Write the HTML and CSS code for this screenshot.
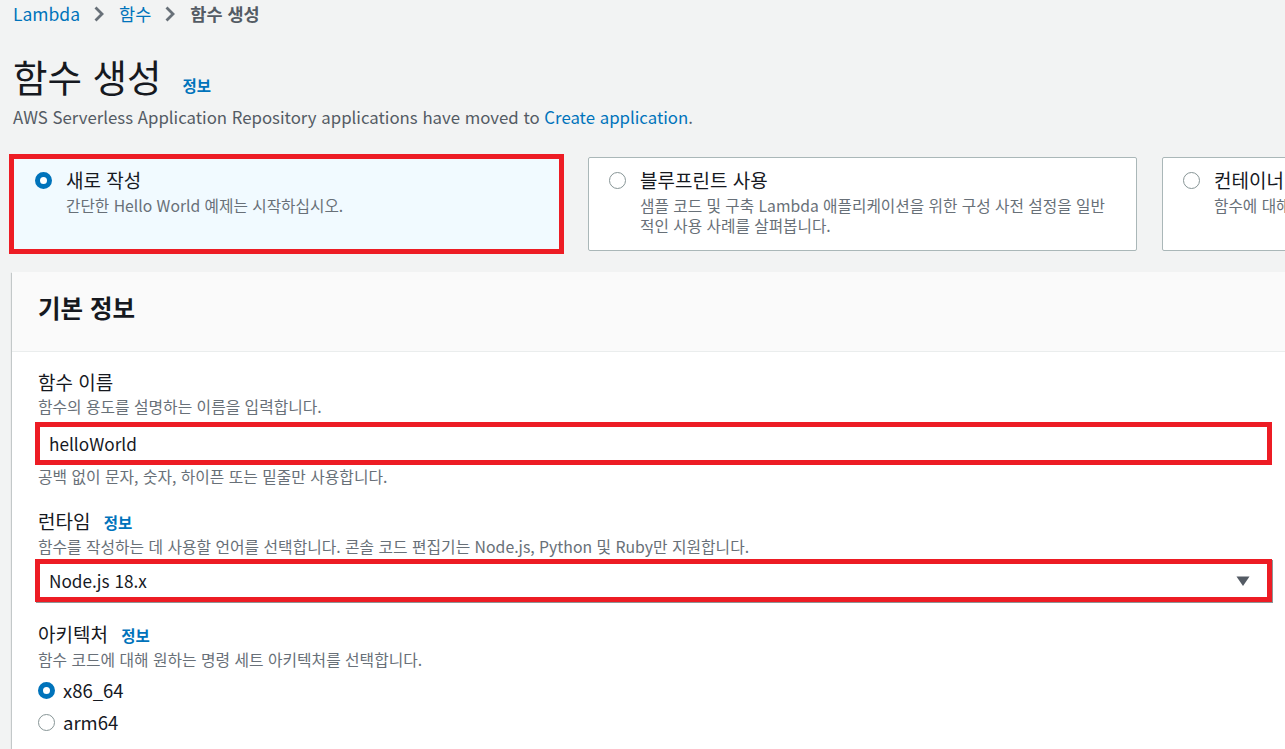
FILE: index.html
```
<!DOCTYPE html>
<html lang="ko">
	<head>
		<meta charset="UTF-8">
		<title>함수 생성</title>
		<link rel="stylesheet" href="styles.css">
	</head>
	<body>
		<nav class="crumbs">
			<a href="#">Lambda</a>
			<svg class="chev" width="12" height="18" viewBox="0 0 12 18"><path d="M2.5 2.5l6.5 6.5-6.5 6.5" fill="none" stroke="#687078" stroke-width="2.8"/></svg>
			<a href="#">함수</a>
			<svg class="chev" width="12" height="18" viewBox="0 0 12 18"><path d="M2.5 2.5l6.5 6.5-6.5 6.5" fill="none" stroke="#687078" stroke-width="2.8"/></svg>
			<span>함수 생성</span>
		</nav>

		<header class="page-head">
			<h1>함수 생성</h1>
			<a href="#" class="info">정보</a>
		</header>
		<p class="notice">AWS Serverless Application Repository applications have moved to <a href="#">Create application</a>.</p>

		<div class="cards">
			<label class="card selected marked">
				<span class="radio on"></span>
				<span class="card-text">
					<span class="card-title">새로 작성</span>
					<span class="card-desc">간단한 Hello World 예제는 시작하십시오.</span>
				</span>
			</label>
			<label class="card">
				<span class="radio"></span>
				<span class="card-text">
					<span class="card-title">블루프린트 사용</span>
					<span class="card-desc">샘플 코드 및 구축 Lambda 애플리케이션을 위한 구성 사전 설정을 일반적인 사용 사례를 살펴봅니다.</span>
				</span>
			</label>
			<label class="card">
				<span class="radio"></span>
				<span class="card-text">
					<span class="card-title">컨테이너 이미지</span>
					<span class="card-desc">함수에 대해 배포할 컨테이너 이미지를 선택합니다.</span>
				</span>
			</label>
		</div>

		<section class="panel">
			<h2 class="panel-head">기본 정보</h2>
			<div class="panel-body">
				<div class="field">
					<div class="label">함수 이름</div>
					<div class="desc">함수의 용도를 설명하는 이름을 입력합니다.</div>
					<div class="input marked">helloWorld</div>
					<div class="desc">공백 없이 문자, 숫자, 하이픈 또는 밑줄만 사용합니다.</div>
				</div>
				<div class="field">
					<div class="label">런타임 <a href="#" class="info">정보</a></div>
					<div class="desc">함수를 작성하는 데 사용할 언어를 선택합니다. 콘솔 코드 편집기는 Node.js, Python 및 Ruby만 지원합니다.</div>
					<div class="input select marked">
						<span>Node.js 18.x</span>
						<svg width="14" height="10" viewBox="0 0 14 10"><path d="M0.5 0.5h13L7 10z" fill="#545b64"/></svg>
					</div>
				</div>
				<div class="field">
					<div class="label">아키텍처 <a href="#" class="info">정보</a></div>
					<div class="desc">함수 코드에 대해 원하는 명령 세트 아키텍처를 선택합니다.</div>
					<div class="choices">
						<label class="choice"><span class="radio on"></span>x86_64</label>
						<label class="choice"><span class="radio"></span>arm64</label>
					</div>
				</div>
			</div>
		</section>
	</body>
</html>
```
FILE: styles.css
```
body {
    margin: 0;
    padding: 2px 13px 0;
    background: #f2f3f3;
    color: #16191f;
    font-family: "Noto Sans CJK KR", "Noto Sans", sans-serif;
    font-size: 16px;
    overflow: hidden;
    width: 1400px;
}

a {
    color: #0073bb;
    text-decoration: none;
}

.crumbs {
    display: flex;
    align-items: center;
    height: 24px;
    line-height: 24px;
    font-size: 17.5px;
}

.crumbs span {
    color: #545b64;
    font-weight: bold;
}

.chev {
    margin: 0 14px 0 13px;
}

.page-head {
    display: flex;
    align-items: baseline;
    gap: 21px;
    margin-top: 25px;
}

h1 {
    margin: 0;
    font-size: 37.5px;
    font-weight: normal;
    line-height: 50px;
}

.info {
    font-size: 15.5px;
    font-weight: bold;
}

.notice {
    margin: 4px 0 0;
    color: #545b64;
    font-size: 16.8px;
    line-height: 24px;
}

.cards {
    display: grid;
    grid-template-columns: repeat(3, 549px);
    grid-auto-rows: 94px;
    column-gap: 26px;
    margin-top: 28px;
}

.card {
    display: flex;
    gap: 14px;
    padding: 9px 20px;
    box-sizing: border-box;
    background: #fff;
    border: 1px solid #aab7b8;
    border-radius: 2px;
}

.card + .card + .card {
    margin-left: -1px;
}

.card.selected {
    background: #f1faff;
}

.marked {
    border: 5px solid #ed1c24 !important;
    border-radius: 0 !important;
}

.card.marked {
    margin: -3px -2px -3px -4px;
    padding: 8px 20px 8px 21px;
}

.card-text {
    display: flex;
    flex-direction: column;
}

.card-title {
    font-size: 19px;
    line-height: 26px;
}

.card-desc {
    margin-top: 3px;
    font-size: 15.7px;
    line-height: 20px;
    color: #687078;
}

.radio {
    flex: none;
    width: 17px;
    height: 17px;
    margin-top: 5px;
    box-sizing: border-box;
    border: 1px solid #879596;
    border-radius: 50%;
    background: #fff;
}

.radio.on {
    border: 5px solid #0073bb;
}

.panel {
    margin: 21px 0 0 -1px;
    width: 1284px;
    background: #fff;
    box-shadow: 0 1px 1px 0 rgba(0, 28, 36, .3), 1px 1px 1px 0 rgba(0, 28, 36, .15), -1px 1px 1px 0 rgba(0, 28, 36, .15);
}

.panel-head {
    margin: 0;
    height: 80px;
    line-height: 72px;
    padding: 0 26px;
    box-sizing: border-box;
    font-size: 24.5px;
    font-weight: bold;
    background: #fafafa;
    border-bottom: 1px solid #eaeded;
}

.panel-body {
    padding: 17px 26px 20px;
}

.field + .field {
    margin-top: 19px;
}

.label {
    font-size: 19px;
    line-height: 26px;
}

.label .info {
    margin-left: 8px;
}

.desc {
    font-size: 15.8px;
    line-height: 24px;
    color: #687078;
}

.input {
    display: flex;
    align-items: center;
    height: 43px;
    margin: 3px 0 0 -3px;
    padding: 0 9px;
    box-sizing: border-box;
    font-size: 17.2px;
    border: 1px solid #aab7b8;
    background: #fff;
    width: 1237px;
}

.select {
    justify-content: space-between;
    margin-top: 0;
    padding-right: 17px;
    box-shadow: 1px 1px 0 #8d9596;
}

.choices {
    display: flex;
    flex-direction: column;
    gap: 8px;
    margin-top: 6px;
}

.choice {
    display: flex;
    align-items: center;
    gap: 8px;
    font-size: 18.5px;
    line-height: 24px;
}

.choice .radio {
    margin: 0;
}
```
